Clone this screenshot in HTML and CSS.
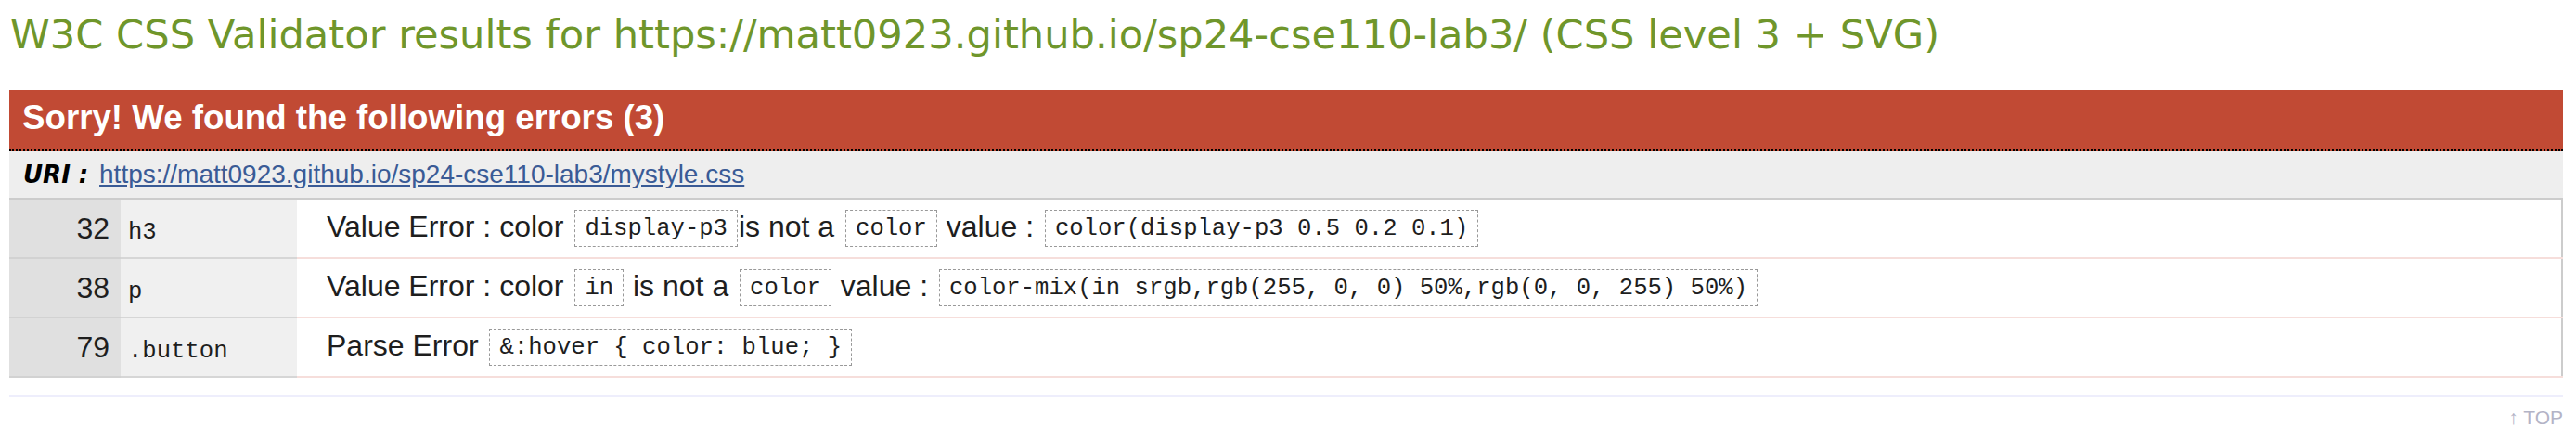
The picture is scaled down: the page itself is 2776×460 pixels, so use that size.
FILE: index.html
```html
<!DOCTYPE html>
<html lang="en">
<head>
<meta charset="utf-8">
<title>W3C CSS Validator results</title>
<link rel="stylesheet" href="styles.css">
</head>
<body>
<div class="page">
  <h2 class="title">W3C CSS Validator results for https://matt0923.github.io/sp24-cse110-lab3/ (CSS level 3 + SVG)</h2>
  <div class="errors">
    <h3 class="errors-head">Sorry! We found the following errors (3)</h3>
    <div class="uri"><span class="uri-label">URI :</span> <a class="uri-link" href="#">https://matt0923.github.io/sp24-cse110-lab3/mystyle.css</a></div>
    <table class="err-table">
      <tr>
        <td class="linenum">32</td>
        <td class="ctx"><code>h3</code></td>
        <td class="msg">Value Error : color <span class="code">display-p3</span>is not a <span class="code">color</span> value : <span class="code">color(display-p3 0.5 0.2 0.1)</span></td>
      </tr>
      <tr>
        <td class="linenum">38</td>
        <td class="ctx"><code>p</code></td>
        <td class="msg">Value Error : color <span class="code">in</span> is not a <span class="code">color</span> value : <span class="code">color-mix(in srgb,rgb(255, 0, 0) 50%,rgb(0, 0, 255) 50%)</span></td>
      </tr>
      <tr>
        <td class="linenum">79</td>
        <td class="ctx"><code>.button</code></td>
        <td class="msg">Parse Error <span class="code">&amp;:hover { color: blue; }</span></td>
      </tr>
    </table>
  </div>
  <div class="backtop"><a class="backtop-link" href="#">↑ TOP</a></div>
</div>
</body>
</html>
```

FILE: styles.css
```css
html, body {
  margin: 0;
  padding: 0;
  background: #ffffff;
}

.page {
  margin-left: 10px;
  width: 2752px;
}

.title {
  margin: 12px 0 35px 1px;
  font-family: "DejaVu Sans", Verdana, sans-serif;
  font-weight: normal;
  font-size: 43.2px;
  line-height: 50px;
  color: #6f962b;
  white-space: nowrap;
}

.errors-head {
  margin: 0;
  padding: 6px 0 10px 14px;
  height: 48px;
  line-height: 48px;
  background: #c14a34;
  color: #ffffff;
  font-family: "Liberation Sans", Arial, sans-serif;
  font-weight: bold;
  font-size: 36.7px;
  border-bottom: 2px dotted #000000;
}

.uri {
  height: 50px;
  line-height: 50px;
  background: #eeeeee;
  padding-left: 15px;
  font-family: "Liberation Sans", Arial, sans-serif;
  font-size: 28px;
}

.uri-label {
  font-family: "DejaVu Sans", Verdana, sans-serif;
  font-weight: bold;
  font-style: italic;
  font-size: 26px;
  color: #000000;
  margin-right: 4px;
}

.uri-link {
  color: #3a5b96;
  text-decoration: underline;
}

.err-table {
  width: 100%;
  border-collapse: collapse;
  border-top: 2px solid #cccccc;
  border-right: 2px solid #cccccc;
  font-family: "Liberation Sans", Arial, sans-serif;
  font-size: 32px;
  color: #1e1e1e;
}

.err-table td {
  height: 62px;
  padding: 0;
  vertical-align: middle;
  white-space: nowrap;
}

.linenum {
  width: 108px;
  padding-right: 12px !important;
  text-align: right;
  background: #e0e0e0;
  border-bottom: 2px solid #d2d2d2;
}

.ctx {
  width: 182px;
  padding-left: 8px !important;
  background: #f0f0f0;
  border-bottom: 2px solid #d6d6d6;
}

.ctx code {
  font-family: "Liberation Mono", "Courier New", monospace;
  font-size: 25.6px;
}

.msg {
  padding-left: 32px !important;
  background: #ffffff;
  border-bottom: 2px solid #f6dedb;
}

.code {
  display: inline-block;
  font-family: "Liberation Mono", "Courier New", monospace;
  font-size: 25.6px;
  line-height: 29px;
  padding: 4.5px 10px;
  border: 1px dashed #999999;
  margin: 0 1px 0 3px;
  vertical-align: 2px;
}

.backtop {
  margin-top: 19px;
  border-top: 2px solid #eeeefc;
  text-align: right;
  padding-top: 10px;
  font-family: "Liberation Sans", Arial, sans-serif;
  font-size: 21px;
}

.backtop-link {
  color: #b3b3c6;
  text-decoration: none;
}
```
